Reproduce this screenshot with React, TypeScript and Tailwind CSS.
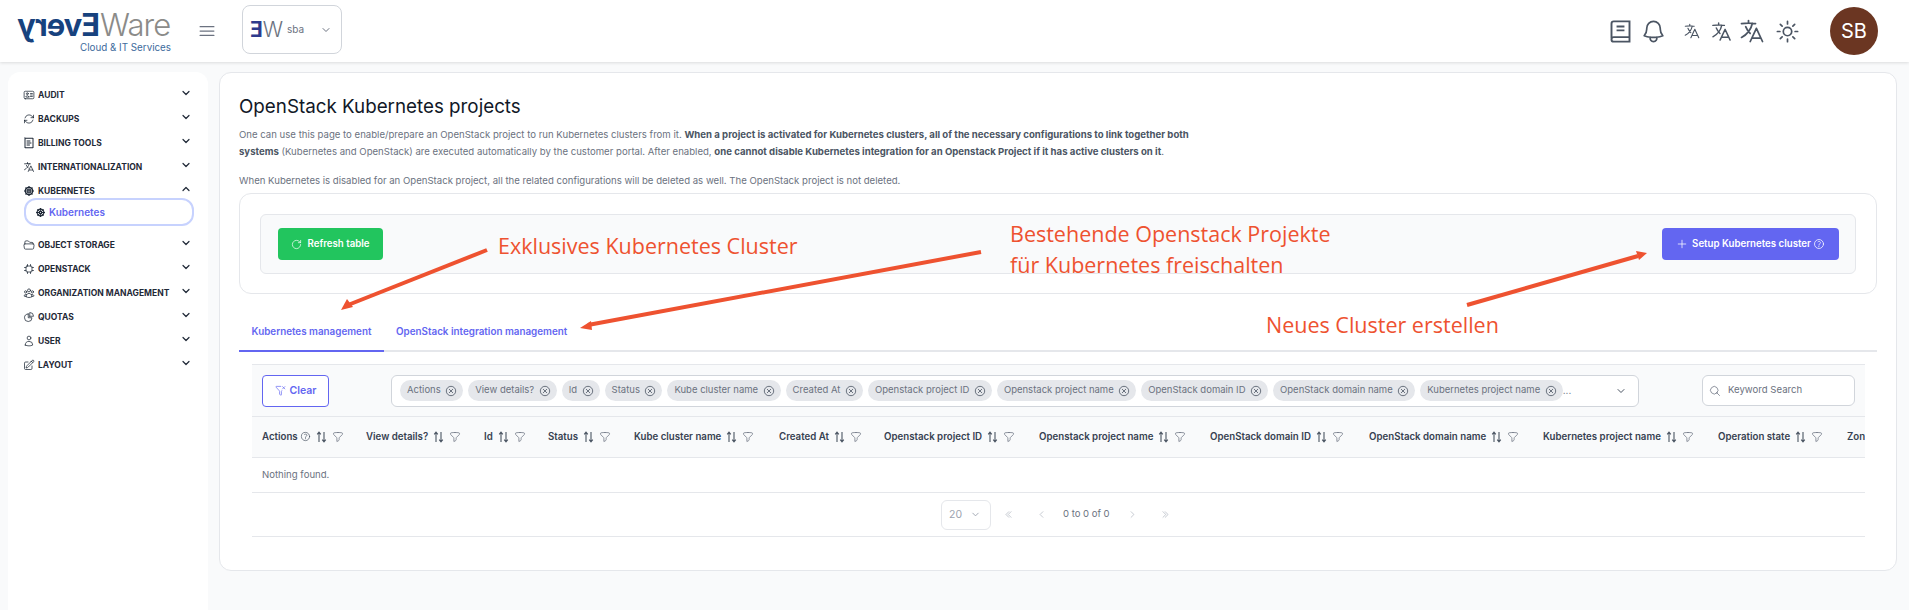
import { ChevronDown, ChevronUp, FunnelX, RotateCw } from 'lucide-react';
import { FaDharmachakra } from 'react-icons/fa';
import {
  HiOutlineArrowPath,
  HiOutlineBars3,
  HiOutlineBell,
  HiOutlineChartPie,
  HiOutlineChevronDoubleLeft,
  HiOutlineChevronDoubleRight,
  HiOutlineChevronLeft,
  HiOutlineChevronRight,
  HiOutlineFolderOpen,
  HiOutlineFunnel,
  HiOutlineIdentification,
  HiOutlineLanguage,
  HiOutlineMagnifyingGlass,
  HiOutlinePencilSquare,
  HiOutlinePlus,
  HiOutlineQuestionMarkCircle,
  HiOutlineSun,
  HiOutlineUser,
  HiOutlineUserGroup,
} from 'react-icons/hi2';
import { LuReceiptText } from 'react-icons/lu';

function ChipIcon({ className }: { className?: string }) {
  return (
    <svg viewBox="0 0 24 24" fill="none" stroke="currentColor" strokeWidth="1.5" strokeLinecap="round" className={className}>
      <rect x="6" y="6" width="12" height="12" rx="2" />
      <path d="M9 3v3M15 3v3M9 18v3M15 18v3M3 9h3M3 15h3M18 9h3M18 15h3" />
    </svg>
  );
}

function RemoveIcon() {
  return (
    <svg viewBox="0 0 12 12" fill="none" stroke="currentColor" strokeWidth="0.8" className="ml-[4.5px] h-[12px] w-[12px] text-[#4b5563]">
      <circle cx="6" cy="6" r="4.7" />
      <path d="M4 4l4 4M8 4l-4 4" />
    </svg>
  );
}

const menu = [
  { label: 'AUDIT', icon: HiOutlineIdentification },
  { label: 'BACKUPS', icon: HiOutlineArrowPath },
  { label: 'BILLING TOOLS', icon: LuReceiptText },
  { label: 'INTERNATIONALIZATION', icon: HiOutlineLanguage },
  { label: 'KUBERNETES', icon: FaDharmachakra, open: true },
  { label: 'OBJECT STORAGE', icon: HiOutlineFolderOpen },
  { label: 'OPENSTACK', icon: ChipIcon },
  { label: 'ORGANIZATION MANAGEMENT', icon: HiOutlineUserGroup },
  { label: 'QUOTAS', icon: HiOutlineChartPie },
  { label: 'USER', icon: HiOutlineUser },
  { label: 'LAYOUT', icon: HiOutlinePencilSquare },
];

const chips = [
  'Actions',
  'View details?',
  'Id',
  'Status',
  'Kube cluster name',
  'Created At',
  'Openstack project ID',
  'Openstack project name',
  'OpenStack domain ID',
  'OpenStack domain name',
  'Kubernetes project name',
];

const columns = [
  { label: 'Actions', width: 'w-[104px]', help: true },
  { label: 'View details?', width: 'w-[118px]' },
  { label: 'Id', width: 'w-[64px]' },
  { label: 'Status', width: 'w-[86px]' },
  { label: 'Kube cluster name', width: 'w-[145px]' },
  { label: 'Created At', width: 'w-[105px]' },
  { label: 'Openstack project ID', width: 'w-[155px]' },
  { label: 'Openstack project name', width: 'w-[171px]' },
  { label: 'OpenStack domain ID', width: 'w-[159px]' },
  { label: 'OpenStack domain name', width: 'w-[174px]' },
  { label: 'Kubernetes project name', width: 'w-[175px]' },
  { label: 'Operation state', width: 'w-[129px]' },
  { label: 'Zone', width: 'w-[80px]' },
];

function SortIcon() {
  return (
    <svg viewBox="0 0 11 12" fill="none" stroke="currentColor" strokeWidth="1.1" className="ml-[5px] h-[12px] w-[11px] shrink-0 text-[#4b5563]">
      <path d="M3 11V1.5M1.2 3.4 3 1.2l1.8 2.2" />
      <path d="M8 1v9.5M6.2 8.6 8 10.8l1.8-2.2" />
    </svg>
  );
}

function Sidebar() {
  return (
    <aside className="w-[200px] shrink-0 rounded-t-xl bg-white px-[15px] pt-[11px]">
      {menu.map((item) => (
        <div key={item.label}>
          <div className="flex h-6 items-center text-[#1f2937]">
            <item.icon className={item.open ? 'h-[10px] w-[12px] shrink-0' : 'h-[12px] w-[12px] shrink-0'} />
            <span className="ml-[3px] text-[8.5px] font-bold whitespace-nowrap">{item.label}</span>
            <span className="ml-auto -translate-y-[2px] pr-[1px]">
              {item.open ? <ChevronUp className="h-3 w-3" strokeWidth={2.4} /> : <ChevronDown className="h-3 w-3" strokeWidth={2.4} />}
            </span>
          </div>
          {item.open && (
            <div className="-mt-[5px] mb-[7px] ml-[1px] flex h-[28px] w-[170px] items-center rounded-xl border-2 border-[#c7d2fe] pl-[10px]">
              <FaDharmachakra className="h-[9px] w-[9px] text-[#1f2937]" />
              <span className="ml-[4px] text-[10px] font-semibold text-[#6366f1]">Kubernetes</span>
            </div>
          )}
        </div>
      ))}
    </aside>
  );
}

function Header() {
  return (
    <header className="flex h-[62px] items-center bg-white pl-[18px] pr-[31px] shadow-[0_1px_3px_rgba(0,0,0,0.12)]">
      <div className="w-[155px]">
        <div className="flex h-[30px] items-center text-[31px] leading-none whitespace-nowrap">
          <span className="inline-block -scale-x-100 font-bold tracking-[-1px] text-[#17427e]">Every</span>
          <span className="font-light tracking-[-1px] text-[#8b8b89]">Ware</span>
        </div>
        <div className="mt-[3px] pr-[2px] text-right text-[9.8px] leading-none text-[#3d6a9c]">Cloud &amp; IT Services</div>
      </div>
      <HiOutlineBars3 className="ml-[24px] h-[20px] w-[20px] text-[#6b7280]" />
      <div className="mb-[3px] ml-[25px] flex h-[49px] w-[100px] items-center rounded-lg border border-[#d1d5db] pl-[7px]">
        <span className="inline-block -scale-x-100 text-[21px] leading-none font-bold text-[#2e3a8c]">E</span>
        <span className="text-[21px] leading-none font-light text-[#6b7280]">W</span>
        <span className="ml-[4px] text-[10px] text-[#6b7280]">sba</span>
        <ChevronDown className="ml-[16px] h-[12px] w-[12px] text-[#6b7280]" />
      </div>
      <div className="ml-auto flex items-center text-[#4b5563]">
        <svg viewBox="0 0 24 24" fill="none" stroke="currentColor" strokeWidth="1.7" className="h-[27px] w-[27px]">
          <path d="M4 18V5a2 2 0 0 1 2-2h14v18H6a2 2 0 0 1-2-2 2 2 0 0 1 2-2h14" />
          <path d="M8.5 7.5h7M8.5 11h7" />
        </svg>
        <HiOutlineBell className="ml-[6px] h-[27px] w-[27px]" />
        <HiOutlineLanguage className="ml-[16px] h-[18px] w-[18px]" />
        <HiOutlineLanguage className="ml-[9px] h-[23px] w-[23px]" />
        <HiOutlineLanguage className="ml-[5px] h-[28px] w-[28px]" />
        <HiOutlineSun className="ml-[8px] h-[27px] w-[27px]" />
        <div className="ml-[29px] flex h-[48px] w-[48px] items-center justify-center rounded-full bg-[#6b3622] text-[20px] text-white">SB</div>
      </div>
    </header>
  );
}

function Toolbar() {
  return (
    <div className="flex h-[53px] items-center border-y border-[#e5e7eb] bg-[#f9fafb] pl-[10px] pr-[10px]">
      <button className="flex h-[32px] w-[67px] items-center justify-center rounded border border-[#6366f1] bg-white text-[10.5px] font-semibold text-[#6366f1]">
        <FunnelX className="mr-[4px] h-[11px] w-[11px]" strokeWidth={1.5} />
        Clear
      </button>
      <div className="ml-[62px] flex h-[32px] w-[1248px] items-center overflow-hidden rounded-md border border-[#d1d5db] bg-white pl-[8px]">
        {chips.map((chip) => (
          <span key={chip} className="mr-[5px] flex h-[21px] shrink-0 items-center rounded-full bg-[#e5e7eb] pl-[7px] pr-[6px] text-[9.5px] whitespace-nowrap text-[#6b7280]">
            {chip}
            <RemoveIcon />
          </span>
        ))}
        <span className="-ml-[5px] text-[10px] text-[#6b7280]">...</span>
        <ChevronDown className="ml-auto mr-[11px] h-[12px] w-[12px] text-[#4b5563]" />
      </div>
      <div className="ml-auto flex h-[31px] w-[153px] items-center rounded-md border border-[#d1d5db] bg-white pl-[6px]">
        <HiOutlineMagnifyingGlass className="h-[12px] w-[12px] text-[#6b7280]" />
        <span className="ml-[7px] text-[9.6px] text-[#6b7280]">Keyword Search</span>
      </div>
    </div>
  );
}

function ClustersTable() {
  return (
    <div className="mx-[13px] mt-[12px] w-[1613px] overflow-hidden">
      <Toolbar />
      <div className="flex h-[41px] items-center overflow-hidden border-b border-[#e5e7eb] bg-[#f9fafb] pl-[10px]">
        {columns.map((col) => (
          <div key={col.label} className={`flex shrink-0 items-center text-[9.7px] font-semibold whitespace-nowrap text-[#374151] ${col.width}`}>
            {col.label}
            {col.help && <HiOutlineQuestionMarkCircle className="ml-[2px] h-[11px] w-[11px] text-[#4b5563]" />}
            <SortIcon />
            <HiOutlineFunnel className="ml-[5px] h-[12px] w-[12px] text-[#6b7280]" />
          </div>
        ))}
      </div>
      <div className="flex h-[35px] items-center border-b border-[#e5e7eb] pl-[10px] text-[9.6px] text-[#6b7280]">Nothing found.</div>
      <div className="flex h-[44px] items-center border-b border-[#e5e7eb] pl-[689px] text-[#9ca3af]">
        <div className="flex h-[30px] w-[50px] items-center rounded-md border border-[#e5e7eb] pl-[7px] text-[10.5px]">
          20
          <ChevronDown className="ml-[8px] h-[11px] w-[11px]" />
        </div>
        <HiOutlineChevronDoubleLeft className="ml-[13px] h-[9px] w-[9px]" />
        <HiOutlineChevronLeft className="ml-[24px] h-[9px] w-[9px]" />
        <span className="ml-[17px] text-[9.5px] text-[#6b7280]">0 to 0 of 0</span>
        <HiOutlineChevronRight className="ml-[18px] h-[9px] w-[9px]" />
        <HiOutlineChevronDoubleRight className="ml-[24px] h-[9px] w-[9px]" />
      </div>
    </div>
  );
}

function Annotations() {
  return (
    <>
      <svg className="pointer-events-none absolute top-0 left-0 h-[610px] w-[1909px]" viewBox="0 0 1909 610">
        <g stroke="#ee5230" strokeWidth="4" fill="none">
          <line x1="487" y1="250" x2="348" y2="305" />
          <line x1="981" y1="252" x2="588" y2="325" />
          <line x1="1467" y1="305" x2="1638" y2="256" />
        </g>
        <g fill="#ee5230">
          <path d="M341 310l6-11 6 8z" />
          <path d="M580 328l11-7 1 9z" />
          <path d="M1647 253l-11-2 3 9z" />
        </g>
      </svg>
      <div className="absolute top-[232px] left-[498px] font-['Open_Sans',sans-serif] text-[21.5px] leading-[28px] whitespace-nowrap text-[#ee5230]">Exklusives Kubernetes Cluster</div>
      <div className="absolute top-[218px] left-[1010px] font-['Open_Sans',sans-serif] text-[21.5px] leading-[31px] whitespace-nowrap text-[#ee5230]">
        Bestehende Openstack Projekte
        <br />
        für Kubernetes freischalten
      </div>
      <div className="absolute top-[311px] left-[1266px] font-['Open_Sans',sans-serif] text-[21.5px] leading-[28px] whitespace-nowrap text-[#ee5230]">Neues Cluster erstellen</div>
    </>
  );
}

export default function App() {
  return (
    <div className="relative h-[610px] w-[1909px] overflow-hidden bg-[#f9fafb] font-['Inter',sans-serif]">
      <Header />
      <div className="flex h-[548px] gap-[11px] pt-[10px] pl-[8px]">
        <Sidebar />
        <main className="h-[499px] w-[1678px] rounded-xl border border-[#e5e7eb] bg-white px-[19px] pt-[20px]">
          <h1 className="text-[18.8px] leading-[28px] text-[#111827]">OpenStack Kubernetes projects</h1>
          <div className="mt-[5px] w-[970px] text-[9.6px] leading-[17px] text-[#6b7280]">
            <p>
              One can use this page to enable/prepare an OpenStack project to run Kubernetes clusters from it.{' '}
              <b className="text-[#4b5563]">When a project is activated for Kubernetes clusters, all of the necessary configurations to link together both systems</b>{' '}
              (Kubernetes and OpenStack) are executed automatically by the customer portal. After enabled,{' '}
              <b className="text-[#4b5563]">one cannot disable Kubernetes integration for an Openstack Project if it has active clusters on it</b>.
            </p>
            <p className="mt-[12px]">When Kubernetes is disabled for an OpenStack project, all the related configurations will be deleted as well. The OpenStack project is not deleted.</p>
          </div>
          <div className="mt-[4px] h-[101px] w-[1638px] rounded-xl border border-[#e5e7eb] px-[20px] pt-[20px]">
            <div className="flex h-[60px] items-center justify-between rounded-md border border-[#e5e7eb] bg-[#f9fafb] pr-[16px] pl-[17px]">
              <button className="flex h-[32px] w-[105px] items-center justify-center rounded bg-[#22c55e] text-[9.7px] font-semibold text-white">
                <RotateCw className="mr-[5px] h-[11px] w-[11px]" strokeWidth={1.5} />
                Refresh table
              </button>
              <button className="flex h-[32px] w-[177px] items-center justify-center rounded bg-[#6366f1] text-[9.7px] font-semibold text-white">
                <HiOutlinePlus className="mr-[4px] h-[12px] w-[12px]" />
                Setup Kubernetes cluster
                <HiOutlineQuestionMarkCircle className="ml-[2px] h-[12px] w-[12px]" />
              </button>
            </div>
          </div>
          <div className="mt-[18px] flex h-[40px] w-[1638px] border-b-2 border-[#e5e7eb] text-[9.85px] font-semibold text-[#6366f1]">
            <div className="-mb-[2px] flex w-[145px] items-center justify-center border-b-2 border-[#6366f1]">Kubernetes management</div>
            <div className="ml-[12px] flex items-center">OpenStack integration management</div>
          </div>
          <ClustersTable />
        </main>
      </div>
      <Annotations />
    </div>
  );
}
